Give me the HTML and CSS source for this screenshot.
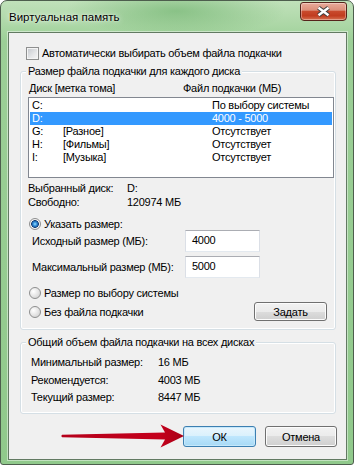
FILE: index.html
```html
<!DOCTYPE html>
<html lang="ru">
<head>
<meta charset="utf-8">
<title>Виртуальная память</title>
<link rel="stylesheet" href="styles.css">
</head>
<body>
<div class="window">
  <div class="titlebar">
    <span class="title">Виртуальная память</span>
    <span class="close">
      <svg width="15" height="11" viewBox="0 0 15 11">
        <path class="x-outline" d="M2.5 1.8 L12.5 9.2 M12.5 1.8 L2.5 9.2"/>
        <path class="x-glyph" d="M2.5 1.8 L12.5 9.2 M12.5 1.8 L2.5 9.2"/>
      </svg>
    </span>
  </div>
  <div class="client">
    <div class="check-row"><span class="checkbox"></span><span>Автоматически выбирать объем файла подкачки</span></div>

    <fieldset class="group group-disks">
      <legend>Размер файла подкачки для каждого диска</legend>
      <div class="list-head"><span>Диск [метка тома]</span><span>Файл подкачки (МБ)</span></div>
      <div class="listbox">
        <div class="row"><span>C:</span><span></span><span>По выбору системы</span></div>
        <div class="row selected"><span>D:</span><span></span><span>4000 - 5000</span></div>
        <div class="row"><span>G:</span><span>[Разное]</span><span>Отсутствует</span></div>
        <div class="row"><span>H:</span><span>[Фильмы]</span><span>Отсутствует</span></div>
        <div class="row"><span>I:</span><span>[Музыка]</span><span>Отсутствует</span></div>
      </div>
      <div class="info">
        <span>Выбранный диск:</span><span>D:</span>
        <span>Свободно:</span><span>120974 МБ</span>
      </div>
      <div class="radio-row first"><span class="radio checked"></span><span>Указать размер:</span></div>
      <div class="field-row"><span class="field-label">Исходный размер (МБ):</span><span class="input">4000</span></div>
      <div class="field-row second"><span class="field-label">Максимальный размер (МБ):</span><span class="input">5000</span></div>
      <div class="bottom-row">
        <div class="radios">
          <div class="radio-row"><span class="radio"></span><span>Размер по выбору системы</span></div>
          <div class="radio-row"><span class="radio"></span><span>Без файла подкачки</span></div>
        </div>
        <span class="btn btn-set">Задать</span>
      </div>
    </fieldset>

    <fieldset class="group group-total">
      <legend>Общий объем файла подкачки на всех дисках</legend>
      <div class="totals">
        <span>Минимальный размер:</span><span>16 МБ</span>
        <span>Рекомендуется:</span><span>4003 МБ</span>
        <span>Текущий размер:</span><span>8447 МБ</span>
      </div>
    </fieldset>

    <div class="buttons">
      <span class="btn btn-default">ОК</span>
      <span class="btn btn-cancel">Отмена</span>
    </div>
  </div>

  <svg class="arrow" width="354" height="465" viewBox="0 0 354 465">
    <defs>
      <linearGradient id="ag" x1="0" y1="0" x2="1" y2="0">
        <stop offset="0" stop-color="#b5001a"/>
        <stop offset="0.8" stop-color="#c4001c"/>
        <stop offset="1" stop-color="#a80016"/>
      </linearGradient>
    </defs>
    <path d="M62 434.7 L165 432.4 L160.5 424.5 L184 436 L160.5 447.5 L165 439.6 L62 437.3 Q60.6 436 62 434.7 Z" fill="url(#ag)"/>
  </svg>
</div>
</body>
</html>
```

FILE: styles.css
```css
* { box-sizing: border-box; }
html, body { margin: 0; padding: 0; }
body {
  width: 354px;
  height: 465px;
  overflow: hidden;
  background: #ffffff;
  font-family: "Liberation Sans", "Noto Sans", sans-serif;
  font-size: 11px;
  letter-spacing: -0.25px;
  color: #000;
  white-space: nowrap;
}

.window {
  position: relative;
  width: 354px;
  height: 465px;
  border: 1px solid #4d5e4d;
  border-radius: 7px 7px 3px 3px;
  padding: 0 6px 4px 7px;
  display: flex;
  flex-direction: column;
  background:
    radial-gradient(ellipse 110px 26px at 175px 10px, rgba(100, 172, 100, 0.55), rgba(100, 172, 100, 0) 100%),
    linear-gradient(180deg, #c0e1ba 0px, #acd7a6 24px, #9ccf97 40px, #90c98b 100%);
}

.titlebar {
  height: 31px;
  display: flex;
  justify-content: space-between;
  align-items: flex-start;
}
.title {
  margin: 9px 0 0 1px;
  font-size: 11.5px;
  letter-spacing: 0;
  line-height: 14px;
  text-shadow: 0 0 6px rgba(255, 255, 255, 0.9), 0 0 2px rgba(255, 255, 255, 0.8);
}
.close {
  width: 47px;
  height: 19px;
  margin-top: 1px;
  border: 1px solid #56241b;
  border-radius: 3px 3px 4px 4px;
  background: linear-gradient(180deg, #e9ab9b 0%, #dc8f7a 42%, #c84a2d 50%, #c13c1f 75%, #d67252 100%);
  box-shadow: inset 0 0 0 1px rgba(255, 255, 255, 0.35);
  display: flex;
  align-items: center;
  justify-content: center;
}
.close svg { display: block; }
.x-outline { stroke: #3f3f3f; stroke-width: 4.4; fill: none; }
.x-glyph { stroke: #ffffff; stroke-width: 2.4; fill: none; }

.client {
  flex: 1;
  background: #f0f0f0;
  border: 1px solid #627a62;
  box-shadow: 0 0 0 1px rgba(255, 255, 255, 0.45);
  padding: 14px 10px 0 11px;
  display: flex;
  flex-direction: column;
}

.check-row {
  margin-left: 6px;
  height: 13px;
  line-height: 13px;
  display: flex;
  align-items: center;
  gap: 3px;
}
.checkbox {
  flex: none;
  width: 13px;
  height: 13px;
  border: 1px solid #8e8f8f;
  background: linear-gradient(135deg, #c3c7cc 0%, #e6e7e9 60%, #f6f6f6 100%);
  box-shadow: inset 0 0 0 1px #f4f4f4;
}

.group {
  margin: 5px 0 0;
  padding: 3px 1px 8px 7px;
  border: 1px solid #d5dfe5;
  border-radius: 3px;
  box-shadow: inset 0 0 0 1px #ffffff;
  min-width: 0;
}
.group legend {
  padding: 0 2px;
  margin-left: -2px;
  line-height: 13px;
  background: #f0f0f0;
}

.list-head {
  display: grid;
  grid-template-columns: 154px 1fr;
  padding-left: 1px;
  line-height: 14px;
}
.listbox {
  margin-top: 2px;
  height: 81px;
  border: 1px solid #828790;
  background: #ffffff;
  padding: 1px 1px 0 1px;
}
.row {
  display: grid;
  grid-template-columns: 31px 149px 1fr;
  height: 13px;
  line-height: 13px;
  padding-left: 2px;
}
.row.selected { background: #3399ff; color: #ffffff; }

.info {
  margin-top: 3px;
  display: grid;
  grid-template-columns: 99px 1fr;
  line-height: 14px;
}

.radio-row {
  height: 14px;
  display: flex;
  align-items: center;
  gap: 3px;
  margin-left: 1px;
}
.radio-row.first { margin-top: 9px; height: 12px; }
.radio {
  flex: none;
  width: 12px;
  height: 12px;
  border-radius: 50%;
  border: 1px solid #8e8f8f;
  background: radial-gradient(circle at 35% 35%, #ffffff 0%, #e8e8e8 45%, #c9c9c9 100%);
}
.radio.checked {
  background: radial-gradient(circle at 50% 50%, #9fe0ff 0px, #3e9be0 1.6px, #1b5fa9 3px, #173f70 3.6px, #f6f6f6 4.1px, #dcdcdc 100%);
}

.field-row {
  display: flex;
  align-items: center;
  height: 22px;
  padding-left: 4px;
}
.field-row.second { margin-top: 4px; }
.field-label { width: 153px; }
.input {
  width: 75px;
  height: 22px;
  border: 1px solid #abadb3;
  border-left-color: #dbdfe6;
  border-right-color: #dbdfe6;
  border-bottom-color: #e3e9ef;
  background: #ffffff;
  padding-left: 6px;
  line-height: 18px;
}

.bottom-row {
  display: flex;
  justify-content: space-between;
  align-items: flex-start;
  margin-top: 8px;
}
.radios {
  display: flex;
  flex-direction: column;
  gap: 5px;
}

.btn {
  display: flex;
  align-items: center;
  justify-content: center;
  border: 1px solid #707070;
  border-radius: 3px;
  background: linear-gradient(180deg, #f2f2f2 0%, #ebebeb 50%, #dddddd 50%, #cfcfcf 100%);
  box-shadow: inset 0 0 0 1px #fcfcfc;
}
.btn-set {
  width: 73px;
  height: 19px;
  margin: 16px 7px 0 0;
}

.totals {
  margin-left: 3px;
  display: grid;
  grid-template-columns: 127px 1fr;
  row-gap: 3.5px;
  line-height: 14px;
}
.group-total { margin-top: 6px; padding-top: 6px; padding-bottom: 9px; }

.buttons {
  margin: 12px -1px 0 0;
  display: flex;
  justify-content: flex-end;
  gap: 9px;
}
.btn-default {
  width: 73px;
  height: 21px;
  border-color: #3c7fb1;
  background: linear-gradient(180deg, #eaf6fd 0%, #d9f0fc 50%, #bee6fd 50%, #a7d9f5 100%);
  box-shadow: inset 0 0 0 1px #c6e8fb;
}
.btn-cancel {
  width: 72px;
  height: 21px;
}

.arrow {
  position: absolute;
  left: -1px;
  top: -1px;
  pointer-events: none;
}
```
